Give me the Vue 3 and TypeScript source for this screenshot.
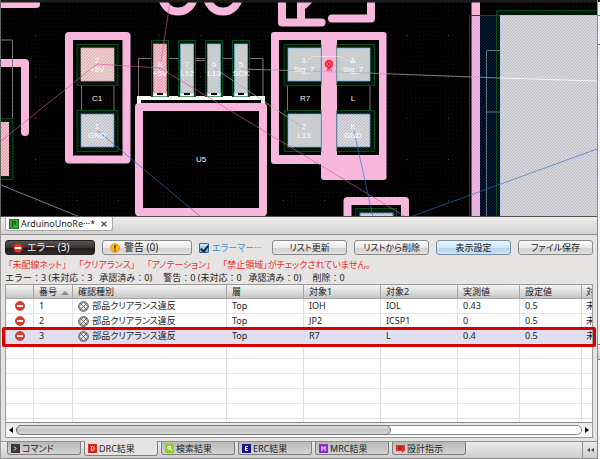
<script setup lang="ts">
import { ref } from 'vue'

interface Violation {
  no: number
  kind: string
  layer: string
  target1: string
  target2: string
  measured: string
  limit: string
  status: string
}

interface ResultTab {
  label: string
  glyph: string
  tone: string
}

const violations: Violation[] = [
  { no: 1, kind: '部品クリアランス違反', layer: 'Top', target1: 'IOH', target2: 'IOL', measured: '0.43', limit: '0.5', status: '未' },
  { no: 2, kind: '部品クリアランス違反', layer: 'Top', target1: 'JP2', target2: 'ICSP1', measured: '0', limit: '0.5', status: '未' },
  { no: 3, kind: '部品クリアランス違反', layer: 'Top', target1: 'R7', target2: 'L', measured: '0.4', limit: '0.5', status: '未' },
]
const emptyRows = 6
const selected = ref(3)
const showMarkers = ref(true)

const unchecked = ['「未配線ネット」', '「クリアランス」', '「アノテーション」', '「禁止領域」がチェックされていません。']

const tabs: ResultTab[] = [
  { label: 'コマンド', glyph: 'M3 2.5L5 4.5L3 6.5', tone: 'dark' },
  { label: 'DRC結果', glyph: 'M3.5 2.5V6.5H4.5Q6 6.5 6 4.5T4.5 2.5Z', tone: 'red' },
  { label: '検索結果', glyph: 'M3 2.5H5.5V5H3ZM5.5 5L7 7', tone: 'lime' },
  { label: 'ERC結果', glyph: 'M6 2.5H3.5V6.5H6M3.5 4.5H5.5', tone: 'navy' },
  { label: 'MRC結果', glyph: 'M3 7V2.5L4.5 4.5L6 2.5V7', tone: 'violet' },
  { label: '設計指示', glyph: '', tone: 'note' },
]
const activeTab = ref(1)

const connectorPads = [
  { x: 153, pin: '8', net: '+5V', fill: 'url(#hatchPink)', edge: '#e58ea5' },
  { x: 180, pin: '7', net: 'L12', fill: 'url(#hatchCyan)', edge: '#6cb8dc' },
  { x: 207, pin: '6', net: 'L13', fill: 'url(#hatchCyan)', edge: '#6cb8dc' },
  { x: 234, pin: '5', net: 'SCK', fill: 'url(#hatchCyan)', edge: '#6cb8dc' },
]

const chipPads = [
  { x: 81, y: 48, pin: '2', net: '+5V', fill: 'url(#hatchRose)', edge: '#e9a0b4' },
  { x: 81, y: 114, pin: '1', net: 'GND', fill: 'url(#hatchBlue)', edge: '#4a8fd8' },
  { x: 288, y: 48, pin: '1', net: 'Sig_7', fill: 'url(#hatchCyan)', edge: '#6cb8dc' },
  { x: 288, y: 114, pin: '2', net: 'L13', fill: 'url(#hatchCyan)', edge: '#6cb8dc' },
  { x: 337, y: 48, pin: 'A', net: 'Sig_7', fill: 'url(#hatchCyan)', edge: '#6cb8dc' },
  { x: 337, y: 114, pin: 'K', net: 'GND', fill: 'url(#hatchBlue)', edge: '#4a8fd8' },
]
</script>

<template>
  <div class="window">
    <main class="main">
      <svg class="board" viewBox="0 0 597 217" preserveAspectRatio="xMinYMin slice" role="img" aria-label="PCB">
        <defs>
          <pattern id="dots" width="4.13" height="4.13" x="2" y="2" patternUnits="userSpaceOnUse">
            <rect width="1" height="1" fill="#151515" />
          </pattern>
          <pattern id="majorDots" width="41.3" height="41.3" x="35" y="35" patternUnits="userSpaceOnUse">
            <rect width="1" height="1" fill="#4a4a4a" />
          </pattern>
          <pattern id="hatchCyan" width="3" height="3" patternUnits="userSpaceOnUse">
            <rect width="3" height="3" fill="#dacdca" />
            <path d="M-1 1L1 -1M0 3L3 0M2 4L4 2" stroke="#a9cbda" stroke-width="1" />
          </pattern>
          <pattern id="hatchBlue" width="3" height="3" patternUnits="userSpaceOnUse">
            <rect width="3" height="3" fill="#e0d7d2" />
            <path d="M-1 1L1 -1M0 3L3 0M2 4L4 2" stroke="#abbcd6" stroke-width="1" />
          </pattern>
          <pattern id="hatchRose" width="3" height="3" patternUnits="userSpaceOnUse">
            <rect width="3" height="3" fill="#e4d6cf" />
            <path d="M-1 1L1 -1M0 3L3 0M2 4L4 2" stroke="#eda6b4" stroke-width="1" />
          </pattern>
          <pattern id="hatchPink" width="3" height="3" patternUnits="userSpaceOnUse">
            <rect width="3" height="3" fill="#eec3cb" />
            <path d="M-1 1L1 -1M0 3L3 0M2 4L4 2" stroke="#e996ad" stroke-width="1" />
          </pattern>
          <pattern id="hatchGreen" width="3" height="3" patternUnits="userSpaceOnUse">
            <rect width="3" height="3" fill="#010b03" />
            <path d="M-1 1L1 -1M0 3L3 0M2 4L4 2" stroke="#05300f" stroke-width="1" />
          </pattern>
          <pattern id="hatchNavy" width="3" height="3" patternUnits="userSpaceOnUse">
            <rect width="3" height="3" fill="#000814" />
            <path d="M-1 1L1 -1M0 3L3 0M2 4L4 2" stroke="#05244c" stroke-width="1" />
          </pattern>
          <pattern id="hatchViolet" width="3" height="3" patternUnits="userSpaceOnUse">
            <rect width="3" height="3" fill="#f6bade" />
            <path d="M-1 1L1 -1M0 3L3 0M2 4L4 2" stroke="#cfa3e0" stroke-width="1" />
          </pattern>
        </defs>
        <rect width="597" height="217" fill="#000" />
        <rect width="597" height="217" fill="url(#dots)" />
        <rect width="597" height="217" fill="url(#majorDots)" />

        <!-- silk outlines -->
        <g fill="none" stroke="#f7b7dc" stroke-width="8" stroke-linejoin="round" stroke-linecap="round">
          <path d="M0 4H36" />
          <path d="M0 63H25V132" />
          <rect x="69" y="36" width="57.500" height="123.500" />
          <circle cx="178" cy="-4.500" r="16" />
          <circle cx="223" cy="-4.500" r="16" />
          <path d="M282 -4V22.500H321.500M301 -4V22M304 5L310 -1" />
          <path d="M332 18.500H371V-4" />
          <path d="M347.500 224V201H405V224" />
        </g>
        <g fill="#f7b7dc">
          <rect x="271" y="32" width="60" height="132" rx="3" />
          <rect x="321" y="32" width="65.500" height="148" rx="3" />
        </g>
        <rect x="279" y="40" width="42" height="115" fill="#000" />
        <rect x="337" y="40" width="42" height="115" fill="#000" />

        <!-- thin body outlines -->
        <g fill="none" stroke="#777" stroke-width="1">
          <path d="M1 40H12.500V155H1M1 128.500H12" />
          <path d="M81.500 80V114M114 80V114" />
          <path d="M138.500 97V58.500H263V97M194 60.500H207" />
          <path d="M287.500 80V114M370 80V114" />
        </g>

        <!-- left edge pad -->
        <rect x="0" y="118.500" width="13" height="61" fill="url(#hatchGreen)" stroke="#0b4a1b" stroke-width="1" />
        <rect x="0" y="122" width="9" height="54" fill="url(#hatchPink)" />

        <!-- U5 -->
        <path d="M139 104V98H263V104" fill="none" stroke="#fff" stroke-width="4" />
        <rect x="137" y="213" width="5" height="4" fill="#fff" />
        <rect x="260" y="213" width="5" height="4" fill="#fff" />
        <rect x="139" y="107" width="124" height="105" fill="#000" />
        <rect x="139" y="107" width="124" height="105" fill="url(#dots)" />
        <rect x="139" y="107" width="124" height="105" fill="none" stroke="#f7b7dc" stroke-width="8" stroke-linejoin="round" />

        <g v-for="pad in connectorPads" :key="pad.x">
          <rect :x="pad.x - 1.500" y="40.500" width="17" height="56" fill="url(#hatchGreen)" stroke="#0b4a1b" />
          <rect :x="pad.x" y="92" width="14" height="4.500" fill="#fff" stroke="#4c8a5c" stroke-width="0.700" />
          <rect :x="pad.x + 0.500" y="44" width="13" height="49" :fill="pad.fill" :stroke="pad.edge" stroke-width="0.700" />
          <rect :x="pad.x + 4" y="93" width="6" height="2" fill="#000" />
        </g>

        <g v-for="pad in chipPads" :key="pad.x + '-' + pad.y">
          <path
            v-if="pad.x < 300"
            :d="`M${pad.x - 4} ${pad.y - 3.5}h${pad.x > 200 ? 37 : 41}v41h-${pad.x > 200 ? 37 : 41}z`"
            fill="url(#hatchGreen)"
            stroke="#0b4a1b"
          />
          <path v-else :d="`M337 ${pad.y - 3.5}h37.500v41h-37.500z`" fill="url(#hatchGreen)" stroke="#0b4a1b" />
          <rect :x="pad.x" :y="pad.y" width="33" height="33" :fill="pad.fill" :stroke="pad.edge" stroke-width="0.700" />
        </g>

        <!-- lower component -->
        <rect x="355.500" y="208.500" width="41" height="12" fill="url(#hatchGreen)" stroke="#0b4a1b" />
        <rect x="360" y="213" width="33" height="8" fill="url(#hatchBlue)" stroke="#4a8fd8" />

        <!-- large pad -->
        <rect x="471.500" y="2" width="8.500" height="14" fill="#f7b7dc" />
        <rect x="480" y="15" width="20" height="202" fill="url(#hatchNavy)" />
        <rect x="471.500" y="15" width="8.500" height="202" fill="url(#hatchViolet)" />
        <path d="M496.500 217V11H597V16H500" fill="url(#hatchGreen)" />
        <path d="M496.500 217V10.500H597" fill="none" stroke="#0b4a1b" />
        <path d="M469.500 217V17Q469.500 15.500 471 15.500H500" fill="none" stroke="#0d3c7c" />
        <path d="M486.500 217V112H500M486.500 112V50.500H500" fill="none" stroke="#677078" />
        <rect x="500" y="15" width="97" height="202" fill="url(#hatchBlue)" />
        <path d="M500.500 217V15.500H597" fill="none" stroke="#b5c7ea" />

        <!-- ratlines -->
        <g fill="none" stroke-width="1">
          <path d="M1 141L97 64L160 68L170 2M160 68L406 217" stroke="#d6559b" opacity="0.650" />
          <path d="M98 131L201 217M354 131L373 217M410 217L597 149" stroke="#2872cf" opacity="0.650" />
          <path d="M1 185L80 217M214 68L304 128M241 69L354 72.500L500 78" stroke="#aaa" opacity="0.750" />
          <path d="M500 78L597 81" stroke="#fff" opacity="0.800" />
          <path d="M304 63L312 56.500H340L354 63" stroke="#fff" opacity="0.450" />
        </g>

        <!-- pin and net names -->
        <g class="net">
          <template v-for="pad in chipPads" :key="pad.x + '-' + pad.y">
            <text :x="pad.x + 16" :y="pad.y + 15">{{ pad.pin }}</text>
            <text :x="pad.x + 16" :y="pad.y + 24">{{ pad.net }}</text>
          </template>
          <template v-for="pad in connectorPads" :key="pad.x">
            <text :x="pad.x + 7" y="67">{{ pad.pin }}</text>
            <text :x="pad.x + 7" y="76">{{ pad.net }}</text>
          </template>
        </g>
        <g class="ref">
          <text x="97" y="101">C1</text>
          <text x="201" y="162">U5</text>
          <text x="305" y="101">R7</text>
          <text x="353" y="101">L</text>
        </g>

        <!-- violation marker -->
        <g fill="none" stroke="#f3202e">
          <circle cx="329" cy="64" r="3.600" fill="#f9566a" stroke-width="1.200" />
          <path d="M326.500 61.500L331.500 66.500M331.500 61.500L326.500 66.500" stroke-width="1" />
          <path d="M326 70H332M327.500 68.500H330.500" stroke-width="1" />
        </g>

        <rect width="597" height="2.500" fill="#1c1c1c" />
        <rect width="1" height="217" fill="#666" />
        <rect y="216" width="597" height="1" fill="#555" />
      </svg>

      <nav class="files">
        <div class="file">
          <svg class="file-icon" viewBox="0 0 10 10" aria-hidden="true">
            <rect x="0.500" y="0.500" width="9" height="9" fill="#3fa535" stroke="#1c7a1c" />
            <path d="M3.500 8V2.500H6.500V5H3.500" fill="none" stroke="#14521a" stroke-width="1.200" />
          </svg>
          <span>ArduinoUnoRe···*</span>
          <button class="close" type="button" aria-label="閉じる">
            <svg viewBox="0 0 6 6"><path d="M0.500 0.500L5.500 5.500M5.500 0.500L0.500 5.500" stroke="#444" stroke-width="1.100" /></svg>
          </button>
        </div>
      </nav>

      <section class="panel">
        <div class="toolbar">
          <button class="btn filter pressed" type="button">
            <svg class="state" viewBox="0 0 10 10" aria-hidden="true">
              <circle cx="5" cy="5" r="4.600" fill="#df3a26" stroke="#b32718" stroke-width="0.600" />
              <rect x="2" y="4" width="6" height="2" fill="#fff" />
            </svg>
            エラー (3)
          </button>
          <button class="btn filter" type="button">
            <svg class="state" viewBox="0 0 10 10" aria-hidden="true">
              <circle cx="5" cy="5" r="4.600" fill="#fbb51c" stroke="#d98c0a" stroke-width="0.600" />
              <path d="M5 2V5.800M5 6.800V8.200" stroke="#4a3000" stroke-width="1.400" />
            </svg>
            警告 (0)
          </button>
          <label class="markers">
            <input v-model="showMarkers" type="checkbox" />
            <span>エラーマー···</span>
          </label>
          <button class="btn" type="button">リスト更新</button>
          <button class="btn" type="button">リストから削除</button>
          <button class="btn active" type="button">表示設定</button>
          <button class="btn" type="button">ファイル保存</button>
        </div>

        <p class="warning">
          <span v-for="part in unchecked" :key="part">{{ part }}</span>
        </p>
        <p class="summary">
          <span>エラー：3 (未対応：3</span><span>承認済み：0)</span>
          <span class="group">警告：0 (未対応：0</span><span>承認済み：0)</span>
          <span class="group">削除：0</span>
        </p>

        <div class="list">
          <div class="sheet">
            <table>
              <colgroup>
                <col class="c-icon" /><col class="c-no" /><col class="c-kind" /><col class="c-mid" /><col class="c-mid" />
                <col class="c-mid" /><col class="c-num" /><col class="c-num" /><col />
              </colgroup>
              <thead>
                <tr>
                  <th></th>
                  <th>
                    番号
                    <svg class="sort" viewBox="0 0 8 4" aria-hidden="true"><path d="M0 4L4 0L8 4Z" fill="#888" /></svg>
                  </th>
                  <th>確認種別</th>
                  <th>層</th>
                  <th>対象1</th>
                  <th>対象2</th>
                  <th>実測値</th>
                  <th>設定値</th>
                  <th>対</th>
                </tr>
              </thead>
              <tbody>
                <tr v-for="v in violations" :key="v.no" :class="{ selected: v.no === selected }" @click="selected = v.no">
                  <td class="center">
                    <svg class="state" viewBox="0 0 10 10" aria-hidden="true">
                      <circle cx="5" cy="5" r="4.600" fill="#df3a26" stroke="#b32718" stroke-width="0.600" />
                      <rect x="2" y="4" width="6" height="2" fill="#fff" />
                    </svg>
                  </td>
                  <td>{{ v.no }}</td>
                  <td>
                    <svg class="mesh" viewBox="0 0 11 11" aria-hidden="true">
                      <circle cx="5.500" cy="5.500" r="4.800" fill="#eee" stroke="#4a4a4a" />
                      <path d="M2 2L9 9M9 2L2 9M5.500 1L10 5.500L5.500 10L1 5.500Z" fill="none" stroke="#555" stroke-width="0.900" />
                    </svg>
                    {{ v.kind }}
                  </td>
                  <td>{{ v.layer }}</td>
                  <td>{{ v.target1 }}</td>
                  <td>{{ v.target2 }}</td>
                  <td>{{ v.measured }}</td>
                  <td>{{ v.limit }}</td>
                  <td>{{ v.status }}</td>
                </tr>
                <tr v-for="n in emptyRows" :key="'e' + n">
                  <td v-for="c in 9" :key="c"></td>
                </tr>
              </tbody>
            </table>
          </div>
          <div class="scroll">
            <svg class="arrow" viewBox="0 0 4 6" aria-hidden="true"><path d="M4 0L0 3L4 6Z" /></svg>
            <div class="track"><div class="thumb"></div></div>
            <svg class="arrow" viewBox="0 0 4 6" aria-hidden="true"><path d="M0 0L4 3L0 6Z" /></svg>
          </div>
          <div class="callout"></div>
        </div>
      </section>

      <footer class="bottom">
        <div class="tabs">
          <button
            v-for="(tab, i) in tabs"
            :key="tab.label"
            type="button"
            class="tab"
            :class="{ current: i === activeTab }"
            @click="activeTab = i"
          >
            <svg class="tab-icon" :class="tab.tone" viewBox="0 0 9 9" aria-hidden="true">
              <template v-if="tab.tone === 'note'">
                <path d="M0 1H9V7H8L7 9L5 7H0Z" fill="#e0352b" />
                <path d="M2 3H7M2 5H6" stroke="#8c1410" />
              </template>
              <template v-else>
                <rect width="9" height="9" />
                <path :d="tab.glyph" fill="none" stroke="#fff" stroke-width="1" />
              </template>
            </svg>
            {{ tab.label }}
          </button>
        </div>
        <button class="collapse" type="button" aria-label="折りたたむ">
          <svg viewBox="0 0 7 4"><path d="M3 0L0 2L3 4ZM7 0L4 2L7 4Z" fill="#444" /></svg>
        </button>
      </footer>
    </main>
    <aside class="side">
      <div class="side-top"></div>
      <div class="side-mid"></div>
      <div class="side-track"></div>
      <div class="side-grip"></div>
      <div class="side-low"></div>
    </aside>
  </div>
</template>

<style>
body {
  margin: 0;
}
</style>

<style scoped>
.window {
  display: flex;
  height: 100vh;
  overflow: hidden;
  background: #e4e3e2;
  color: #222;
  font-family: 'Noto Sans', 'Noto Sans CJK JP', sans-serif;
  font-size: 9px;
  line-height: 13px;
  font-feature-settings: 'palt';
}
.window * {
  box-sizing: border-box;
}
.main {
  flex: 1;
  min-width: 0;
  display: flex;
  flex-direction: column;
  border-bottom: 1px solid #8c8c8c;
}
.board {
  display: block;
  flex: none;
  width: 100%;
  height: 217px;
}
.board text {
  font-family: 'Liberation Sans', sans-serif;
  text-anchor: middle;
}
.net {
  fill: #fff;
  font-size: 8px;
}
.ref {
  fill: #f4f4f4;
  font-size: 8px;
}
button {
  font: inherit;
  font-feature-settings: inherit;
  color: inherit;
  padding: 0;
  white-space: nowrap;
}
.files {
  flex: none;
  height: 18px;
  padding-left: 4px;
  border-left: 1px solid #999;
  border-bottom: 1px solid #8e8e8e;
  background: linear-gradient(#efeeed, #d3d2d1);
}
.file {
  display: flex;
  align-items: center;
  gap: 2px;
  width: 108px;
  height: 14px;
  padding: 0 5px 0 3px;
  border: 1px solid #a8a8a8;
  border-top: 0;
  border-radius: 0 0 3px 3px;
  background: #fff;
}
.file-icon {
  width: 10px;
  height: 10px;
}
.close {
  display: flex;
  margin-left: auto;
  border: 0;
  background: none;
}
.close svg {
  width: 6px;
  height: 6px;
}
.panel {
  flex: 1;
  min-height: 0;
  display: flex;
  flex-direction: column;
  padding: 5px 4px 3px 4px;
  border-left: 1px solid #999;
  background: #e5e4e3;
}
.toolbar {
  display: flex;
  gap: 7px;
  height: 15px;
  margin-bottom: 3px;
}
.btn {
  flex: 1 1 75px;
  display: flex;
  align-items: center;
  justify-content: center;
  border: 1px solid #8a8a8a;
  border-radius: 3px;
  background: linear-gradient(#fbfbfb, #e9e9e9 50%, #d2d2d2 55%, #e0e0e0);
}
.filter {
  flex-basis: 90px;
  justify-content: flex-start;
  gap: 4px;
  padding-left: 7px;
  font-size: 10px;
}
.pressed {
  border-color: #222;
  color: #f2f2f2;
  background: linear-gradient(#5c5452, #3a3331 50%, #1f1918 55%, #332c2a);
}
.active {
  border-color: #7a8ea2;
  background: linear-gradient(#e9f4fd, #d0e6f8 50%, #b2d4f0 55%, #cbe4f8);
}
.state {
  flex: none;
  width: 10px;
  height: 10px;
  vertical-align: middle;
}
.markers {
  flex: 1 1 66px;
  display: flex;
  align-items: center;
  gap: 3px;
  color: #3f8ecb;
  white-space: nowrap;
}
.markers input {
  appearance: none;
  flex: none;
  display: flex;
  justify-content: center;
  width: 10px;
  height: 10px;
  margin: 0;
  border: 1px solid #2c6a9c;
  border-radius: 1px;
  background: linear-gradient(#d4ecfb, #5badde);
}
.markers input:checked::before {
  content: '';
  width: 3px;
  height: 6px;
  border: solid #0e2334;
  border-width: 0 2px 2px 0;
  transform: rotate(40deg);
}
.warning,
.summary {
  display: flex;
  margin: 0;
  white-space: nowrap;
}
.warning {
  gap: 12px;
  padding-left: 3px;
  color: #ee2a2a;
}
.summary {
  gap: 7px;
  font-feature-settings: normal;
}
.group {
  margin-left: 4px;
}
.list {
  position: relative;
  flex: 1;
  min-height: 0;
  display: flex;
  flex-direction: column;
  border: 1px solid #999;
  background: #fff;
}
.sheet {
  flex: 1;
  min-height: 0;
  overflow: hidden;
}
table {
  width: 100%;
  table-layout: fixed;
  border-collapse: separate;
  border-spacing: 0;
}
.c-icon {
  width: 28px;
}
.c-no {
  width: 39px;
}
.c-kind {
  width: 154px;
}
.c-mid {
  width: 77px;
}
.c-num {
  width: 62px;
}
th,
td {
  height: 15px;
  padding: 0 0 0 5px;
  overflow: hidden;
  white-space: nowrap;
  text-align: left;
  font-weight: 400;
  border-right: 1px solid #dcdcea;
  border-bottom: 1px solid #e4e4e4;
}
th {
  height: 14px;
  border-right-color: #a2a2a2;
  border-bottom-color: #a2a2a2;
  background: linear-gradient(#f4f4f4, #dedede 50%, #c6c6c6);
}
th:last-child,
td:last-child {
  padding-left: 4px;
  border-right: 0;
}
td {
  line-height: 14px;
}
.center {
  padding: 0;
  text-align: center;
}
.center .state {
  display: block;
  margin: 0 auto;
}
.selected td {
  background: #dfdfef;
}
.sort {
  width: 8px;
  height: 4px;
  margin-left: 2px;
  vertical-align: middle;
}
.mesh {
  width: 11px;
  height: 11px;
  margin-right: 1px;
  vertical-align: middle;
}
.scroll {
  flex: none;
  display: flex;
  align-items: center;
  gap: 3px;
  height: 15px;
  padding: 0 3px;
  border-top: 1px solid #8c8c8c;
  background: linear-gradient(#e6e6e6, #fff);
}
.arrow {
  width: 4px;
  height: 6px;
}
.track {
  flex: 1;
  height: 10px;
  border: 1px solid #8a8a8a;
  border-radius: 5px;
  background: #fff;
}
.thumb {
  width: 66.5%;
  height: 10px;
  margin: -1px;
  border: 1px solid #777;
  border-radius: 5px;
  background: linear-gradient(#e0e0e0, #c6c6c6 50%, #d8d8d8);
}
.callout {
  position: absolute;
  top: 42px;
  left: -4px;
  right: -4px;
  height: 20px;
  border: 3px solid #d60000;
  border-radius: 2px;
  pointer-events: none;
}
.bottom {
  flex: none;
  display: flex;
  height: 17px;
  border-left: 1px solid #999;
  border-top: 1px solid #909090;
  background: linear-gradient(#eceaea, #cfcecd);
}
.tabs {
  flex: 1;
  display: flex;
  gap: 3px;
  padding-left: 6px;
}
.tab {
  display: flex;
  align-items: center;
  gap: 2px;
  width: 74px;
  height: 13px;
  padding-left: 3px;
  border: 1px solid #7e7e7e;
  border-top: 0;
  border-radius: 0 0 3px 3px;
  background: linear-gradient(#b8b8b8, #d4d4d4);
}
.tab.current {
  height: 15px;
  margin-top: -1px;
  background: #e5e4e3;
}
.tab-icon {
  flex: none;
  width: 9px;
  height: 9px;
}
.dark {
  fill: #3c3635;
}
.red {
  fill: #e2231a;
}
.lime {
  fill: #93cc1e;
}
.navy {
  fill: #1c1a86;
}
.violet {
  fill: #8f2ad2;
}
.collapse {
  display: flex;
  align-items: center;
  justify-content: center;
  width: 15px;
  border: 0;
  border-left: 1px solid #909090;
  background: none;
}
.collapse svg {
  width: 7px;
  height: 4px;
}
.side {
  flex: none;
  display: flex;
  flex-direction: column;
  width: 3px;
  border-left: 1px solid #8c8c8c;
  background: #f4f4f4;
}
.side-top {
  height: 16px;
  border-top: 2px solid #1c1c1c;
  border-bottom: 1px solid #777;
}
.side-mid {
  height: 29px;
  border-bottom: 1px solid #777;
}
.side-track {
  flex: 3;
}
.side-grip {
  height: 16px;
  border: solid #777;
  border-width: 1px 0;
  background: linear-gradient(#f4f4f4, #cfcfcf);
}
.side-low {
  flex: 1;
}
</style>
